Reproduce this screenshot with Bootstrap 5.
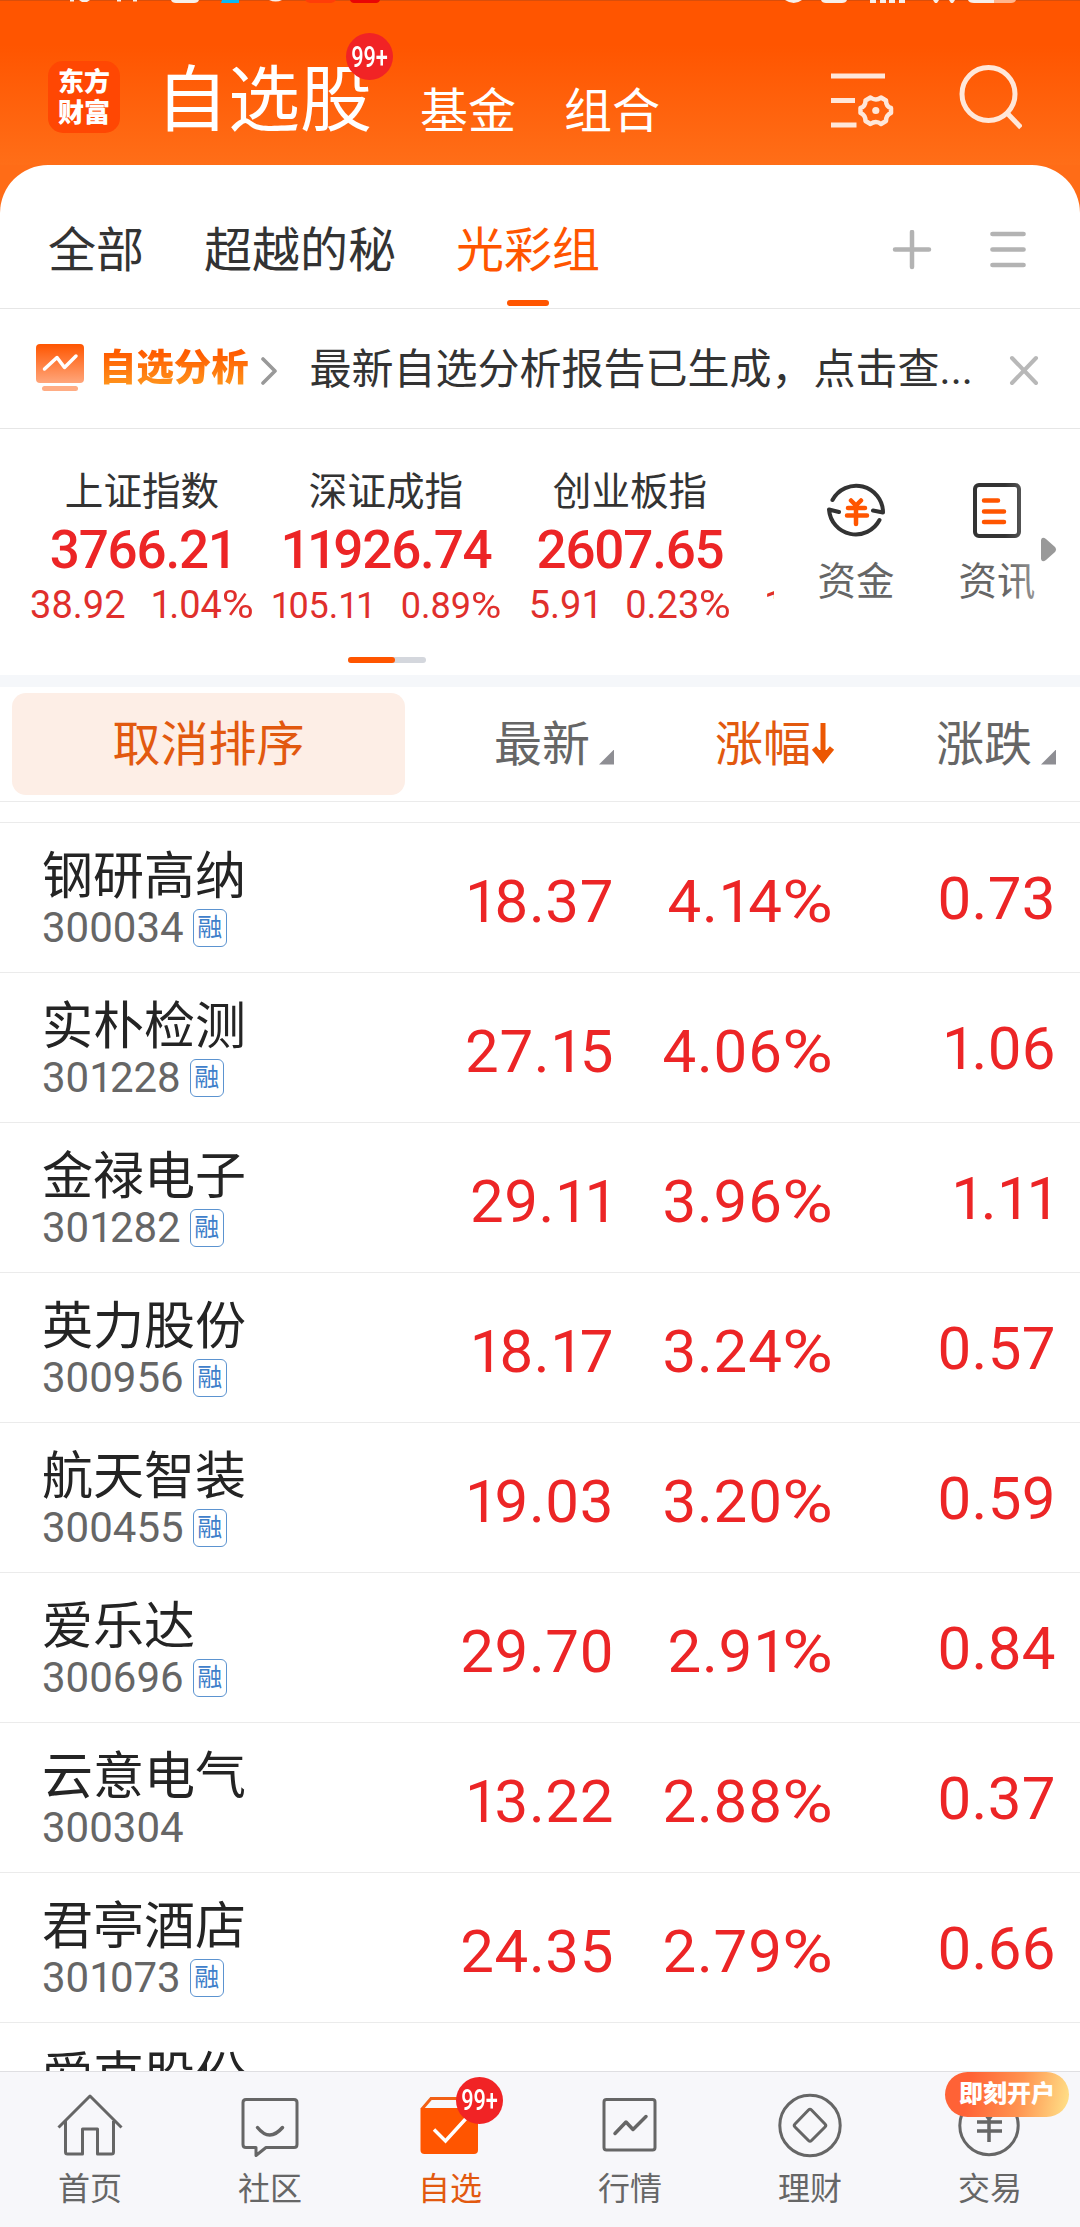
<!DOCTYPE html>
<html lang="zh-CN">
<head>
<meta charset="utf-8">
<meta name="viewport" content="width=device-width, initial-scale=1">
<title>自选股</title>
<link href="https://cdn.jsdelivr.net/npm/bootstrap@5.3.0/dist/css/bootstrap.min.css" rel="stylesheet">
<style>
  body { font-family: Roboto, "Noto Sans CJK SC", sans-serif; line-height: 1; color: #333; background: #fff; }
  .app { width: 1080px; height: 2227px; overflow: hidden; white-space: nowrap; }
  .app svg { display: block; flex: none; }
  .brand { color: #ff5500; }
  .accent { color: #e2590f; }
  .up { color: #ec2526; }

  .topbar { height: 165px; background: linear-gradient(#ff5500 0, #ff5500 45px, #ff6e18 165px); }
  .status { height: 3px; }
  .topline { height: 162px; padding: 0 48px; }
  .logo { width: 72px; height: 72px; margin-top: 58px; border-radius: 15px; background: #ff4703; color: #fff; font-size: 26px; line-height: 31px; font-weight: 900; padding-top: 6px; }
  .title-main { font-size: 72px; line-height: 72px; margin: 62px 0 0 36px; color: #fff; }
  .title-sub { font-size: 48px; line-height: 48px; margin-top: 85px; color: #fff; }
  .count { width: 47px; height: 47px; background: #f12325; color: #fff; font-size: 29px; font-weight: 500; border-radius: 50%; }
  .count span { transform: scaleX(.75); }
  .count-title { left: 190px; top: -32px; }
  .icon-set { margin: 63px 0 0 171px; }
  .icon-search { margin: 61px 0 0 61px; }

  .sheet-wrap { background: #ff6c17; }
  .sheet { border-radius: 48px 48px 0 0; background: #fff; }
  .tabs { height: 144px; padding: 28px 52px 0 48px; border-bottom: 1px solid #e6e6e6; gap: 60px; font-size: 48px; }
  .tab-on::after { content: ""; position: absolute; left: 51px; bottom: -31px; width: 42px; height: 6px; border-radius: 3px; background: #ff5500; }

  .notice { height: 120px; padding: 2px 41px 0 36px; border-bottom: 1px solid #e6e6e6; }
  .notice-label { font-size: 37.4px; line-height: 50px; font-weight: 900; margin: -4px 0 0 15px; color: transparent; background: linear-gradient(#ff5c00 20%, #ff941c 85%); -webkit-background-clip: text; background-clip: text; }
  .notice-text { font-size: 42px; margin-left: 31px; width: 665px; }
  .chev { margin-left: 12px; }

  .indices { height: 246px; padding-left: 20px; }
  .quote { width: 244px; padding-top: 43px; }
  .quote-name { font-size: 38.6px; line-height: 40px; }
  .quote-val { font-size: 53px; line-height: 52px; font-weight: 500; margin-top: 12px; letter-spacing: -1.2px; }
  .quote-chg { font-size: 38px; line-height: 40px; margin-top: 9px; height: 40px; color: #e02f2c; gap: 25px; }
  .quote-chg.tight { font-size: 36px; gap: 27px; padding-top: 1px; }
  .peek { width: 7px; margin: 156px 42px 0 15px; font-size: 38px; height: 14px; line-height: 40px; color: #e02f2c; text-indent: -3px; }
  .pager { left: 348px; top: 228px; width: 78px; height: 6px; border-radius: 3px; background: #d4d7dd; }
  .pager i { display: block; width: 47px; height: 6px; border-radius: 3px; background: #ff5500; }
  .tool { font-size: 38.4px; line-height: 40px; color: #666; width: 80px; padding-top: 50px; }
  .tool + .tool { margin-left: 61px; }
  .tool svg { margin: 0 auto 21px; }
  .fade-r { left: 48px; top: 0; width: 60px; height: 200px; background: linear-gradient(90deg, rgba(255,255,255,0), rgba(255,255,255,.6)); }
  .more { left: 1041px; top: 108px; }
  .band { height: 12px; background: #f5f7fa; }

  .sortbar { height: 115px; border-bottom: 1px solid #ebebeb; font-size: 48px; color: #666; padding: 6px 24px 6px 12px; }
  .cancel { width: 393px; height: 102px; border-radius: 14px; background: #fdeee6; font-size: 48px; line-height: 104px; padding: 0; border: 0; }
  .sort-label { padding-top: 2px; }
  .sort-price { margin-left: 89px; }
  .sort-rate { margin-left: 101px; }
  .corner { width: 15px; height: 15px; background: #8e8e93; clip-path: polygon(100% 0, 100% 100%, 0 100%); margin: 24px 0 0 9px; }
  .spacer { height: 21px; border-bottom: 1px solid #ebebeb; }

  .stock { height: 150px; border-bottom: 1px solid #ebebeb; padding: 0 24px 0 42px; }
  .stock-id { width: 386px; padding-top: 28px; }
  .stock-name { font-size: 51px; line-height: 52px; color: #242424; }
  .stock-code { font-size: 42px; line-height: 38px; color: #666; margin-top: 6px; height: 38px; }
  .rong { width: 34px; height: 38px; border: 1.5px solid #5b93d0; border-radius: 6px; color: #3f80ca; font-size: 25px; line-height: 35px; margin-left: 9px; }
  .num { font-size: 60px; line-height: 60px; }
  .n1 { width: 186px; margin-top: 49px; letter-spacing: .6px; }
  .n2 { width: 220px; margin-top: 49px; letter-spacing: .8px; }
  .n3 { width: 222px; margin-top: 46px; letter-spacing: .4px; }
  .one { letter-spacing: -.07em; }
  .pc { display: inline-block; transform: scaleX(1.15); transform-origin: right; margin-left: .11em; }
  .list { height: 1248px; overflow: hidden; }

  .tabbar { height: 156px; border-top: 1px solid #dfdfe2; background: #f7f7fa; color: #666; font-size: 32px; }
  .dock { width: 180px; padding-top: 17px; }
  .dock svg { margin: -1px auto 7px; }
  .dock-label { line-height: 40px; }
  .count-dock { left: 96px; top: 5px; }
  .promo { left: 45px; top: 0; width: 124px; height: 45px; border-radius: 23px; color: #fff; font-size: 24px; line-height: 45px; font-weight: 900; background: linear-gradient(100deg, #ff6236 20%, #ff9350 60%, #ffdf87 98%); }
</style>
</head>
<body>
<div class="app d-flex flex-column">

  <header class="topbar">
    <svg class="status" width="1080" height="3" viewBox="0 0 1080 3">
      <path fill="#d94e0b" d="M0 0h1080v1H0z"/>
      <g fill="#f6efea">
        <path d="M70 0h4v1.500h-4zM79 0h11l-3 2h-5zM117 0h4v1.500h-4zM133 0h4v1.500h-4zM171 0h28q-1 3-5 3h-18q-4 0-5-3zM269 0h13q-6 3-13 0zM785 0h17q-8 6-17 0zM821 0h26q-1 3-5 3h-16q-4 0-5-3zM870 0h6v3h-6zM880 0h6v3h-6zM889 0h6v3h-6zM899 0h6v3h-6zM933 0h6l-2 3h-2zM949 0h6l-2 3h-2zM968 0h26v3h-20q-5 0-6-3z"/>
        <path fill="#ffb58d" d="M994 0h22q-1 3-5 3h-17z"/>
      </g>
      <path fill="#08b8f5" d="M222 0h17v3h-18z"/>
      <path fill="#ff3d08" d="M305 0h31q-2 3-5 3h-21q-3 0-5-3z"/>
      <path fill="#e90505" d="M350 0h30q-1 3-4 3h-22q-3 0-4-3z"/>
    </svg>
    <div class="topline d-flex align-items-start">
      <div class="logo text-center">东方<br>财富</div>
      <div class="title-main position-relative">自选股<span class="count count-title position-absolute d-flex align-items-center justify-content-center"><span>99+</span></span></div>
      <div class="title-sub ms-5">基金</div>
      <div class="title-sub ms-5">组合</div>
      <svg class="icon-set" width="66" height="66" viewBox="0 0 66 66" fill="none" stroke="#ffe7d9" stroke-width="5">
        <path d="M0 10h54M0 34.500h24M0 59h25.500"/>
        <path stroke-width="4.500" stroke-linejoin="round" d="M39.500 31.500q5.500 4 10.500 0l5 3q0 6 5 7.500v5q-5 2-5 8l-5 3q-5-4-10.500 0l-5-3q0-6-5-8v-5q5-1.500 5-7.500z"/>
        <circle cx="44.800" cy="44.500" r="3.600" fill="#ffe7d9" stroke="none"/>
      </svg>
      <svg class="icon-search" width="64" height="68" viewBox="0 0 64 68" fill="none" stroke="#ffe7d9" stroke-width="5">
        <circle cx="30.500" cy="30" r="26.500"/><path d="M48.500 48.500l14.500 15"/>
      </svg>
    </div>
  </header>

  <div class="sheet-wrap">
    <nav class="sheet tabs d-flex align-items-center">
      <span>全部</span><span>超越的秘</span><span class="tab-on brand position-relative">光彩组</span>
      <div class="d-flex ms-auto align-items-center">
        <svg width="40" height="42" viewBox="0 0 40 42" stroke="#b3b3b3" stroke-width="4.500" stroke-linecap="round"><path d="M3 19.500h34M20 2v35"/></svg>
        <svg class="ms-5" width="48" height="42" viewBox="0 0 48 42" stroke="#b3b3b3" stroke-width="4.700" stroke-linecap="round"><path d="M12.500 4h31M12.500 19.500h31M12.500 35h31"/></svg>
      </div>
    </nav>
  </div>

  <section class="notice d-flex align-items-center">
    <svg width="48" height="48" viewBox="0 0 48 48" class="mb-1">
      <defs><linearGradient id="chartFill" x2="0" y2="1"><stop stop-color="#ff5500"/><stop offset="1" stop-color="#ffa67b"/></linearGradient></defs>
      <rect width="48" height="39" y="0" rx="4" fill="url(#chartFill)"/>
      <path d="M8.500 25L21 13.500l7.500 10L40 12" fill="none" stroke="#fff" stroke-width="3.500" stroke-linecap="round" stroke-linejoin="round"/>
      <rect x="6" y="42" width="36" height="5" rx="2.500" fill="#ffad85"/>
    </svg>
    <span class="notice-label">自选分析</span>
    <svg width="18" height="30" viewBox="0 0 18 30" class="chev" fill="none" stroke="#999" stroke-width="3.600" stroke-linecap="round" stroke-linejoin="round"><path d="M2 4l12 12L2 28"/></svg>
    <span class="notice-text">最新自选分析报告已生成，点击查...</span>
    <svg class="ms-auto" width="30" height="32" viewBox="0 0 30 32" stroke="#b8b8b8" stroke-width="4" stroke-linecap="round"><path d="M3 4l24 25M27 4L3 29"/></svg>
  </section>

  <section class="indices position-relative d-flex align-items-start">
    <div class="quote text-center">
      <div class="quote-name">上证指数</div><div class="quote-val up" data-n>3766.21</div>
      <div class="quote-chg d-flex justify-content-center"><span data-n>38.92</span><span data-n>1.04%</span></div>
    </div>
    <div class="quote text-center">
      <div class="quote-name">深证成指</div><div class="quote-val up" data-n>11926.74</div>
      <div class="quote-chg tight d-flex justify-content-center"><span data-n>105.11</span><span data-n>0.89%</span></div>
    </div>
    <div class="quote text-center">
      <div class="quote-name">创业板指</div><div class="quote-val up" data-n>2607.65</div>
      <div class="quote-chg d-flex justify-content-center"><span data-n>5.91</span><span data-n>0.23%</span></div>
    </div>
    <div class="peek overflow-hidden">1</div>
    <div class="tool text-center">
      <svg width="62" height="62" viewBox="0 0 62 62" fill="none" stroke="#333" stroke-width="4" stroke-linecap="round" stroke-linejoin="round">
        <path d="M7.500 21A26.800 26.800 0 0 1 58 33.500L48 31.500M54.500 41A26.800 26.800 0 0 1 4 30.500L14 33"/>
        <path stroke="#ff5500" stroke-width="4.500" d="M26 21.500l5 5 5-5M31 27v18M23 29h17M22 36.500h20"/>
      </svg>
      资金
    </div>
    <div class="tool text-center position-relative">
      <svg width="62" height="62" viewBox="0 0 62 62" fill="none" stroke="#333" stroke-width="4">
        <rect x="9" y="6" width="44" height="51" rx="4"/>
        <path stroke="#ff5500" stroke-width="4.500" stroke-linecap="round" d="M18 21.500h14M18 32.500h20M18 43h20"/>
      </svg>
      资讯
      <span class="fade-r position-absolute"></span>
    </div>
    <svg class="more position-absolute" width="16" height="25" viewBox="0 0 16 25"><path fill="#999" d="M0 3Q1-1 5 2l9 8q2 2.500 0 5l-9 8q-4 3-5-1z"/></svg>
    <div class="pager position-absolute"><i></i></div>
  </section>
  <div class="band"></div>

  <section class="sortbar d-flex align-items-center">
    <button class="cancel btn accent">取消排序</button>
    <div class="sort-label sort-price d-flex align-items-center">最新<i class="corner"></i></div>
    <div class="sort-label sort-rate accent d-flex align-items-center">涨幅<svg width="24" height="44" viewBox="0 0 24 44" fill="none" stroke="#ec5702"><path stroke-width="5" d="M12 0v36"/><path stroke-width="5.500" d="M3 25l9 11 9-11"/><path fill="#ec5702" stroke="none" d="M3 27h18l-9 14z"/></svg></div>
    <div class="sort-label d-flex align-items-center ms-auto">涨跌<i class="corner"></i></div>
  </section>
  <div class="spacer"></div>

  <main class="list" id="list"></main>

  <nav class="tabbar d-flex text-center">
    <div class="dock">
      <svg width="70" height="74" viewBox="0 0 70 74" fill="none" stroke="#666" stroke-width="3" stroke-linejoin="round"><path d="M3.500 39.500L35 8l31.500 31.500M10.500 33v31q0 2 2 2h15V41h15v25h14q2 0 2-2V33"/></svg>
      <div class="dock-label">首页</div>
    </div>
    <div class="dock">
      <svg width="70" height="74" viewBox="0 0 70 74" fill="none" stroke="#666" stroke-width="3" stroke-linejoin="round" stroke-linecap="round"><path d="M11 11.500h48q3 0 3 3v42q0 3-3 3H31l-10 8v-8H11q-3 0-3-3v-42q0-3 3-3z"/><path d="M22.500 39.500q12 15 25 0" stroke-width="3.500"/></svg>
      <div class="dock-label">社区</div>
    </div>
    <div class="dock accent position-relative">
      <svg width="70" height="74" viewBox="0 0 70 74"><path fill="none" stroke="#f26015" stroke-width="3" d="M7 21L16 10.500h37l10 10.500"/><path fill="#ff5500" d="M5.500 20h57.500v42q0 4-4 4H9.500q-4 0-4-4z"/><path fill="none" stroke="#fff" stroke-width="3.500" d="M19 41.500l11.500 11.500L51 30.500"/></svg>
      <span class="count count-dock position-absolute d-flex align-items-center justify-content-center"><span>99+</span></span>
      <div class="dock-label">自选</div>
    </div>
    <div class="dock">
      <svg width="70" height="74" viewBox="0 0 70 74" fill="none" stroke="#666" stroke-width="3" stroke-linejoin="round"><rect x="9" y="11.500" width="51" height="50.500" rx="2.500"/><path stroke-width="3.500" stroke-linecap="round" d="M20 45.500l11-11.500 7 7.500L51 28.500"/></svg>
      <div class="dock-label">行情</div>
    </div>
    <div class="dock">
      <svg width="70" height="74" viewBox="0 0 70 74" fill="none" stroke="#666" stroke-width="3" stroke-linejoin="round"><circle cx="35" cy="37.500" r="30.200"/><path d="M33.500 22q1.500-1.500 3 0L50 36q1.500 1.500 0 3L36.500 52.500q-1.500 1.500-3 0L20 39q-1.500-1.500 0-3z"/></svg>
      <div class="dock-label">理财</div>
    </div>
    <div class="dock position-relative">
      <svg width="70" height="74" viewBox="0 0 70 74" fill="none" stroke="#666" stroke-width="3"><circle cx="34" cy="37.500" r="29.200"/><path stroke-width="3.500" d="M26 20l8 11 8-11M34 31v23M22 34h25M22 43h25"/></svg>
      <span class="promo position-absolute">即刻开户</span>
      <div class="dock-label">交易</div>
    </div>
  </nav>
</div>

<script>
  // Watch list: name, code, margin-trading flag, price, change %, change
  const stocks = [
    ["钢研高纳", "300034", 1, "18.37", "4.14%", "0.73"],
    ["实朴检测", "301228", 1, "27.15", "4.06%", "1.06"],
    ["金禄电子", "301282", 1, "29.11", "3.96%", "1.11"],
    ["英力股份", "300956", 1, "18.17", "3.24%", "0.57"],
    ["航天智装", "300455", 1, "19.03", "3.20%", "0.59"],
    ["爱乐达", "300696", 1, "29.70", "2.91%", "0.84"],
    ["云意电气", "300304", 0, "13.22", "2.88%", "0.37"],
    ["君亭酒店", "301073", 1, "24.35", "2.79%", "0.66"],
    ["爱克股份", "", 0, "", "", ""]
  ];
  // The digit 1 is set narrower than the others, the percent sign wider
  const fit = s => s.replace(/1/g, '<span class="one">1</span>').replace("%", '<span class="pc">%</span>');
  document.getElementById("list").innerHTML = stocks.map(([name, code, rong, p, pct, d]) => `
    <div class="stock d-flex align-items-start">
      <div class="stock-id"><div class="stock-name">${name}</div>
        <div class="stock-code d-flex align-items-center"><span>${fit(code)}</span>${rong ? '<span class="rong text-center">融</span>' : ''}</div></div>
      <div class="num n1 up text-end">${fit(p)}</div>
      <div class="num n2 up text-end">${fit(pct)}</div>
      <div class="num n3 up text-end">${fit(d)}</div>
    </div>`).join("");
  document.querySelectorAll("[data-n]").forEach(e => { e.innerHTML = fit(e.textContent); });
</script>
<script src="https://cdn.jsdelivr.net/npm/bootstrap@5.3.0/dist/js/bootstrap.bundle.min.js"></script>
</body>
</html>
